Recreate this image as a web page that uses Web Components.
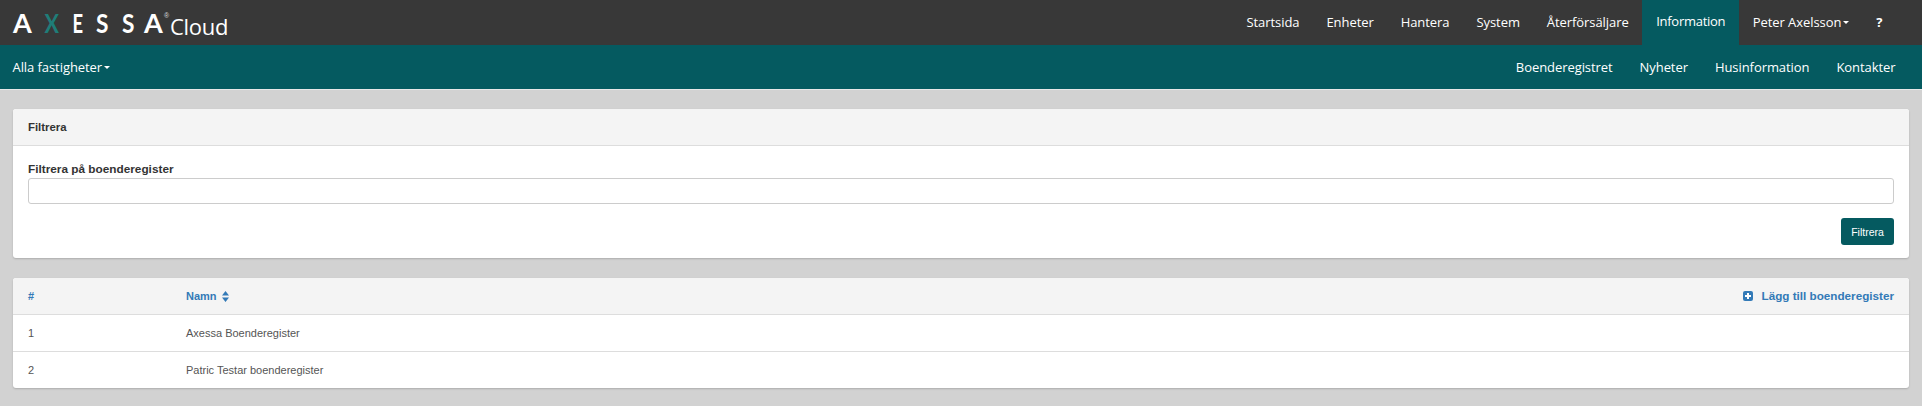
<!DOCTYPE html>
<html lang="sv"><head><meta charset="utf-8"><title>Axessa Cloud</title>
<style>
html,body{margin:0;padding:0;height:406px;overflow:hidden;background:#d2d2d2;font-family:"Liberation Sans",Arial,sans-serif}
</style></head><body>
<axs-app></axs-app>
<script>
const NAVFONT='"Open Sans","Noto Sans",sans-serif';
function def(name,css,html){
  customElements.define(name,class extends HTMLElement{
    constructor(){super();const r=this.attachShadow({mode:'open'});
      r.innerHTML='<style>'+css+'</style>'+(typeof html==='function'?html(this):html);}
  });
}
def('axs-logo',`:host{display:flex;align-items:flex-start;height:45px;color:#fff;padding-left:13px;white-space:nowrap}
.m{display:flex;margin-top:9px;font:700 27px/27px "Lato",sans-serif}
.m span{display:block;text-align:center}
.a{width:18px}
.x{width:14px;margin-left:12px;color:#1f7d78;transform:scaleX(.8)}
.e{width:10px;margin-left:14px;transform:scaleX(.68)}
.s{width:12px;margin-left:14px;transform:scaleX(.84)}
.a2{width:18px;margin-left:11px}
.r{font:400 7px/7px "Liberation Sans",sans-serif;margin:12px 0 0 2px;color:#ddd;width:5px}
.c{font:400 22px/24px "Open Sans",sans-serif;margin:14px 0 0 1px;letter-spacing:-.3px}`,
`<div class="m"><span class="a">A</span><span class="x">X</span><span class="e">E</span><span class="s">S</span><span class="s">S</span><span class="a2">A</span></div><span class="r">®</span><span class="c">Cloud</span>`);
def('axs-nav-item',`:host{display:flex;align-items:center;height:100%;box-sizing:border-box;padding:0 13.5px;color:#fff;font:400 13px/18px ${NAVFONT};white-space:nowrap;letter-spacing:-.07px}
:host([active]){background:#055a60;padding:0 14px;letter-spacing:-.27px}
:host([b]){font-weight:700}
.car{display:inline-block;border-top:3px solid #fff;border-left:3px solid transparent;border-right:3px solid transparent;margin-left:2px;vertical-align:middle}`,
h=>`<slot></slot>${h.hasAttribute('caret')?'<span class="car"></span>':''}`);
def('axs-topbar',`:host{display:flex;justify-content:space-between;height:45px;background:#383838}
nav{display:flex;padding-right:26px}
::slotted(axs-nav-item){padding-bottom:1px}
::slotted(axs-nav-item[active]){padding-bottom:3px}`,
`<axs-logo></axs-logo><nav><slot></slot></nav>`);
def('axs-subbar',`:host{display:flex;justify-content:space-between;height:44px;background:#055a60;box-shadow:0 1px 0 #e8e8e8}
nav{display:flex;height:44px}
nav.l{margin-left:-1px}
nav.e{padding-right:13px}`,
`<nav class="l"><slot name="left"></slot></nav><nav class="e"><slot name="right"></slot></nav>`);
def('axs-panel',`:host{display:block;margin:0 13px;background:#fff;border-radius:3px;box-shadow:0 1px 2px rgba(0,0,0,.18)}`,`<slot></slot>`);
def('axs-panel-head',`:host{display:flex;align-items:center;height:36px;padding:0 15px;background:#f4f4f4;border-bottom:1px solid #ddd;border-radius:3px 3px 0 0;color:#333;font:700 11.4px/14px "Liberation Sans",sans-serif}`,`<slot></slot>`);
def('axs-filter-form',`:host{display:block;padding:16px 15px 13px}
label{display:block;font:700 11.8px/14px "Liberation Sans",sans-serif;color:#333;margin-bottom:2px}
input{display:block;box-sizing:border-box;width:100%;height:26px;border:1px solid #ccc;border-radius:3px;background:#fff;margin:0;padding:0 6px}
.f{display:flex;justify-content:flex-end;margin-top:14px}
button{width:53px;height:27px;background:#055a60;color:#fff;border:0;border-radius:3px;font:400 10.5px/14px "Liberation Sans",sans-serif;padding:0}`,
`<label for="q">Filtrera på boenderegister</label><input id="q" type="text"><div class="f"><button type="button">Filtrera</button></div>`);
def('axs-table',`:host{display:block;font:400 11px/14px "Liberation Sans",sans-serif;color:#555}
.r{display:grid;grid-template-columns:158px 1fr auto;align-items:center;height:36px;padding:0 15px;border-bottom:1px solid #ddd}
.r:last-child{border-bottom:0}
.h{background:#f4f4f4;color:#337ab7;font-weight:700;border-radius:3px 3px 0 0}
.a{display:flex;align-items:center;font-size:11.7px;gap:9px}
svg{display:block}
.n{display:flex;align-items:center;gap:5px}`,
`<div class="r h"><span>#</span><span class="n">Namn <svg width="7" height="11" viewBox="0 0 7 11"><path d="M3.5 0 7 4.4H0zM3.5 11 0 6.6h7z" fill="#337ab7"/></svg></span><span class="a"><svg width="10" height="10" viewBox="0 0 10 10"><rect width="10" height="10" rx="2" fill="#337ab7"/><path d="M4 2h2v2h2v2H6v2H4V6H2V4h2z" fill="#fff"/></svg>Lägg till boenderegister</span></div>
<div class="r"><span>1</span><span>Axessa Boenderegister</span></div>
<div class="r"><span>2</span><span>Patric Testar boenderegister</span></div>`);
def('axs-app',`:host{display:block}
.c{display:flex;flex-direction:column;gap:20px;padding-top:20px}`,
`<axs-topbar>
<axs-nav-item>Startsida</axs-nav-item><axs-nav-item>Enheter</axs-nav-item><axs-nav-item>Hantera</axs-nav-item><axs-nav-item>System</axs-nav-item><axs-nav-item>Återförsäljare</axs-nav-item><axs-nav-item active>Information</axs-nav-item><axs-nav-item caret>Peter Axelsson</axs-nav-item><axs-nav-item b>?</axs-nav-item>
</axs-topbar>
<axs-subbar>
<axs-nav-item slot="left" caret>Alla fastigheter</axs-nav-item>
<axs-nav-item slot="right">Boenderegistret</axs-nav-item><axs-nav-item slot="right">Nyheter</axs-nav-item><axs-nav-item slot="right">Husinformation</axs-nav-item><axs-nav-item slot="right">Kontakter</axs-nav-item>
</axs-subbar>
<div class="c">
<axs-panel><axs-panel-head>Filtrera</axs-panel-head><axs-filter-form></axs-filter-form></axs-panel>
<axs-panel><axs-table></axs-table></axs-panel>
</div>`);
</script>
</body></html>
